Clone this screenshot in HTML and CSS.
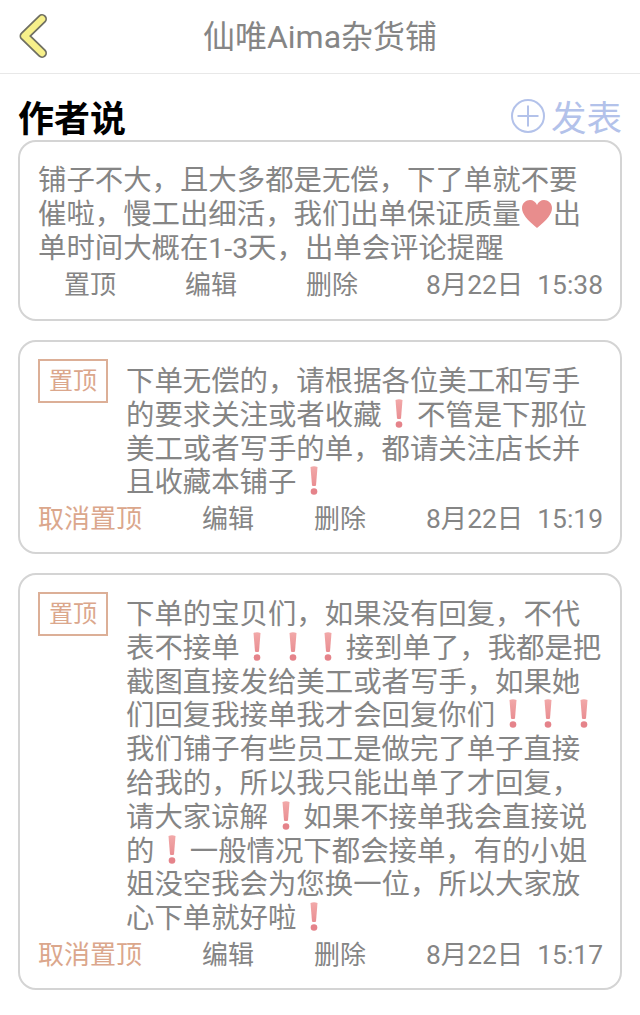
FILE: index.html
```html
<!DOCTYPE html>
<html lang="zh-CN">

<head>
    <meta charset="UTF-8">
    <meta name="viewport" content="width=device-width, initial-scale=1.0">
    <title>仙唯Aima杂货铺</title>
    <link rel="stylesheet" href="styles.css">
</head>

<body>
    <svg width="0" height="0" class="defs">
        <linearGradient id="markfill" x1="0" y1="0" x2="0" y2="1">
            <stop offset="0" stop-color="#f2a9a9" />
            <stop offset="1" stop-color="#e98e92" />
        </linearGradient>
        <symbol id="mark" viewBox="0 0 14 30">
            <path d="M3.5 1.5 Q7 0 10.5 1.5 L9 20 Q7 21 5 20 Z" fill="url(#markfill)" />
            <circle cx="7" cy="26" r="3.3" fill="#e5838a" />
        </symbol>
    </svg>

    <header class="topbar">
        <svg class="back" width="32" height="46" viewBox="0 0 32 46">
            <path d="M25 6 L7.5 23 L25 40" fill="none" stroke="#6f6f62" stroke-width="10" stroke-linecap="round" stroke-linejoin="round" />
            <path d="M25 6 L7.5 23 L25 40" fill="none" stroke="#f7f08a" stroke-width="6.5" stroke-linecap="round" stroke-linejoin="round" />
        </svg>
        <h1 class="shop">仙唯Aima杂货铺</h1>
    </header>

    <div class="head">
        <h2 class="says">作者说</h2>
        <div class="post">
            <svg class="plus" width="34" height="34" viewBox="0 0 34 34">
                <circle cx="17" cy="17" r="16" fill="none" stroke="#b3c2ea" stroke-width="2" />
                <path d="M6.5 17 H27.5 M17 6.5 V27.5" fill="none" stroke="#b3c2ea" stroke-width="2" />
            </svg>
            <span>发表</span>
        </div>
    </div>

    <section class="card card-one">
        <p class="text">铺子不大，且大多都是无偿，下了单就不要<br>催啦，慢工出细活，我们出单保证质量<svg class="heart" width="32" height="30" viewBox="0 0 32 30"><path d="M16 29 C6 21 1 15 1 9 C1 4 5 1 9 1 C12 1 15 3 16 6 C17 3 20 1 23 1 C27 1 31 4 31 9 C31 15 26 21 16 29 Z" fill="#e88d8d" /></svg>出<br>单时间大概在1-3天，出单会评论提醒</p>
        <div class="meta">
            <div class="actions actions-plain">
                <span>置顶</span>
                <span>编辑</span>
                <span>删除</span>
            </div>
            <div class="stamp"><span>8月22日</span><span>15:38</span></div>
        </div>
    </section>

    <section class="card card-two">
        <div class="body">
            <span class="tag">置顶</span>
            <p class="text">下单无偿的，请根据各位美工和写手<br>的要求关注或者收藏<svg class="mark"><use href="#mark" /></svg>不管是下那位<br>美工或者写手的单，都请关注店长并<br>且收藏本铺子<svg class="mark"><use href="#mark" /></svg></p>
        </div>
        <div class="meta">
            <div class="actions">
                <span class="cancel">取消置顶</span>
                <span>编辑</span>
                <span>删除</span>
            </div>
            <div class="stamp"><span>8月22日</span><span>15:19</span></div>
        </div>
    </section>

    <section class="card card-three">
        <div class="body">
            <span class="tag">置顶</span>
            <p class="text">下单的宝贝们，如果没有回复，不代<br>表不接单<svg class="mark"><use href="#mark" /></svg><svg class="mark"><use href="#mark" /></svg><svg class="mark"><use href="#mark" /></svg>接到单了，我都是把<br>截图直接发给美工或者写手，如果她<br>们回复我接单我才会回复你们<svg class="mark"><use href="#mark" /></svg><svg class="mark"><use href="#mark" /></svg><svg class="mark"><use href="#mark" /></svg><br>我们铺子有些员工是做完了单子直接<br>给我的，所以我只能出单了才回复，<br>请大家谅解<svg class="mark"><use href="#mark" /></svg>如果不接单我会直接说<br>的<svg class="mark"><use href="#mark" /></svg>一般情况下都会接单，有的小姐<br>姐没空我会为您换一位，所以大家放<br>心下单就好啦<svg class="mark"><use href="#mark" /></svg></p>
        </div>
        <div class="meta">
            <div class="actions">
                <span class="cancel">取消置顶</span>
                <span>编辑</span>
                <span>删除</span>
            </div>
            <div class="stamp"><span>8月22日</span><span>15:17</span></div>
        </div>
    </section>
</body>

</html>
```

FILE: styles.css
```css
body {
    margin: 0;
    background-color: #fff;
    color: #858585;
    font-family: Roboto, "Noto Sans CJK SC", sans-serif;
}

.defs {
    display: block;
    height: 0;
}

.topbar {
    height: 73px;
    border-bottom: 1px solid #e8e8e8;
    display: flex;
    align-items: center;
    justify-content: center;
    position: relative;
}

.back {
    position: absolute;
    left: 17px;
    top: 13px;
}

.shop {
    margin: 0;
    font-size: 32px;
    font-weight: 400;
    line-height: 74px;
    color: #858585;
}

.head {
    box-sizing: border-box;
    display: flex;
    justify-content: space-between;
    align-items: center;
    height: 66px;
    padding: 26px 18px 0;
}

.says {
    margin: 0;
    font-size: 36px;
    line-height: 40px;
    font-weight: 700;
    color: #000;
}

.post {
    display: flex;
    align-items: center;
    gap: 6px;
    font-size: 35.5px;
    color: #b3c2ea;
}

.plus {
    margin-bottom: 8px;
}

.post span {
    line-height: 40px;
    margin-bottom: 3px;
}

.card {
    box-sizing: border-box;
    margin: 0 18px 19px;
    border: 2px solid #d4d4d4;
    border-radius: 18px;
    padding: 17px 18px 0;
}

.card-one {
    height: 181px;
    padding-top: 22px;
}

.card-two {
    height: 214px;
}

.card-three {
    height: 417px;
}

.body {
    display: flex;
    align-items: flex-start;
    gap: 18px;
}

.body .text {
    margin-top: 6px;
}

.text {
    margin: 0;
    font-size: 28.4px;
    line-height: 33.8px;
    white-space: nowrap;
}

.heart {
    vertical-align: -5px;
}

/* negative margins so the marks don't stretch their line */
.mark {
    width: 14px;
    height: 31px;
    margin: -6px 10.7px;
    vertical-align: 2px;
}

.tag {
    box-sizing: border-box;
    flex: none;
    width: 70px;
    height: 44px;
    border: 2px solid #dcaf97;
    color: #dba78c;
    font-size: 24px;
    line-height: 40px;
    text-align: center;
}

.meta {
    display: flex;
    justify-content: space-between;
    align-items: center;
    font-size: 26px;
    line-height: 38px;
}

.card-one .meta {
    margin-top: 1px;
}

.actions {
    display: flex;
    gap: 60px;
}

.actions-plain {
    gap: 69px;
    padding-left: 26px;
}

.cancel {
    color: #dba78c;
}

.stamp {
    display: flex;
    gap: 14px;
    margin-right: -1px;
    font-size: 26.4px;
}
```
